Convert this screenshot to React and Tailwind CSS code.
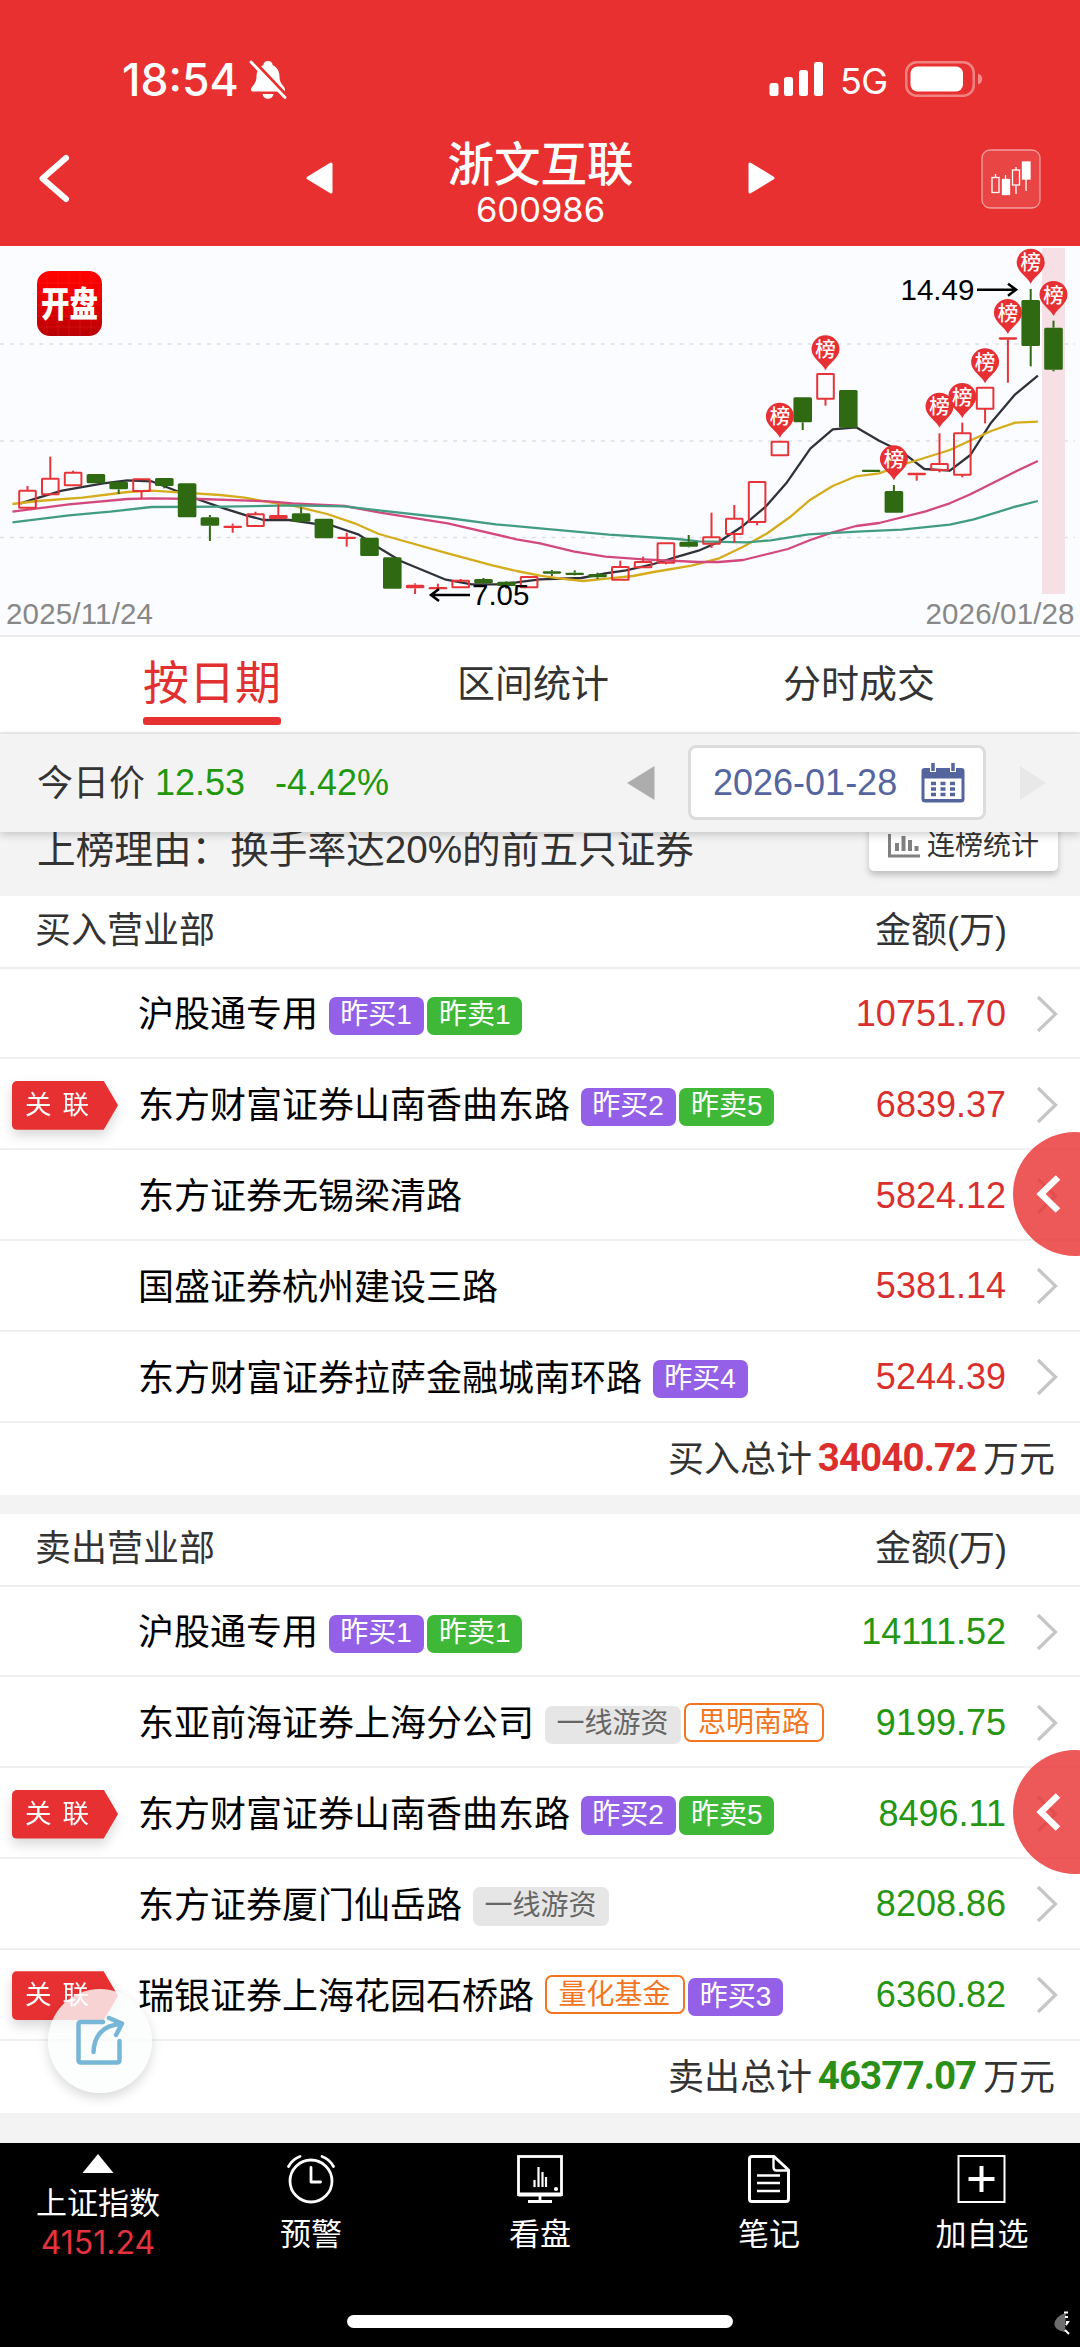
import React from "react";

const STEP = 22.8;
const cx = (i) => 27.5 + i * STEP;
const cy = (v) => v / 3 - 6;

// [kind, body top, body bottom, high, low]; r = rising (hollow), f = rising (solid), g = falling
const CANDLES = [
  ["r", 752, 803, 738, 808], ["r", 716, 763, 650, 763], ["r", 698, 736, 692, 736],
  ["g", 702, 730, 702, 730], ["g", 725, 748, 725, 762], ["r", 718, 753, 718, 776],
  ["g", 714, 738, 714, 745], ["g", 730, 832, 730, 832], ["g", 832, 857, 825, 903],
  ["f", 857, 864, 851, 878], ["r", 823, 858, 815, 858], ["f", 825, 837, 793, 837],
  ["g", 820, 845, 802, 845], ["g", 836, 895, 836, 895], ["f", 890, 897, 878, 920],
  ["g", 893, 948, 893, 948], ["g", 952, 1046, 952, 1046], ["f", 1034, 1045, 1030, 1062],
  ["f", 1041, 1048, 1031, 1051], ["r", 1022, 1042, 1017, 1042], ["g", 1017, 1030, 1014, 1032],
  ["g", 1025, 1038, 1023, 1046], ["r", 1011, 1042, 1011, 1042], ["g", 994, 1001, 990, 1008],
  ["g", 998, 1005, 991, 1006], ["g", 1002, 1012, 998, 1017], ["r", 981, 1019, 962, 1019],
  ["r", 966, 982, 950, 982], ["r", 910, 968, 910, 973], ["g", 905, 920, 885, 922],
  ["r", 892, 911, 818, 924], ["r", 836, 882, 795, 908], ["r", 726, 846, 726, 856],
  ["r", 605, 646, 605, 646], ["g", 472, 547, 472, 570], ["r", 402, 476, 402, 497],
  ["g", 450, 563, 450, 563], ["g", 689, 696, 689, 696], ["g", 753, 818, 735, 818],
  ["f", 698, 706, 698, 722], ["r", 672, 690, 580, 697], ["r", 580, 704, 548, 712],
  ["r", 443, 506, 443, 550], ["f", 292, 299, 292, 428], ["g", 180, 318, 147, 379],
  ["g", 263, 389, 242, 394],
];

const PINS = [[33, 530], [35, 328], [38, 658], [40, 500], [41, 471], [42, 367], [43, 219], [44, 68], [45, 165]];

const L = [
  ["#30323a",
    [[60,790],[105,775],[180,752],[300,730],[370,721],[440,724],[513,753],[580,780],[650,805],[715,826],[765,840],[840,840],[912,851],[968,858],[1040,883],[1105,926],[1165,964],[1295,1019],[1370,1033],[1440,1033],[1500,1027]],
    [[0,1018],[120,1014],[190,1000],[250,991],[330,972],[400,950],[460,932],[520,905],[590,857],[655,800],[715,730],[785,626],[850,568],[918,562],[985,602],[1050,635],[1116,687],[1190,692],[1250,645],[1310,548],[1380,463],[1446,407]]],
  ["#d4ac1c",
    [[36,792],[110,783],[240,773],[370,756],[440,752],[520,757],[640,765],[710,773],[790,788],[850,797],[950,822],[1030,850],[1100,882],[1300,940],[1430,976],[1500,993]],
    [[0,1007],[60,1016],[125,1023],[200,1015],[270,1008],[330,996],[440,977],[520,955],[590,920],[660,880],[725,832],[785,779],[850,738],[918,709],[985,700],[1060,672],[1190,630],[1310,573],[1380,548],[1446,545]]],
  ["#d3487d",
    [[36,815],[200,793],[370,777],[440,775],[580,777],[780,784],[850,790],[1000,798],[1100,817],[1300,850],[1500,898]],
    [[0,910],[100,935],[190,950],[300,958],[460,966],[520,966],[590,960],[720,927],[785,900],[850,877],[918,858],[985,849],[1120,814],[1190,790],[1250,763],[1380,695],[1446,663]]],
  ["#419c82",
    [[36,847],[200,826],[320,815],[440,801],[650,800],[850,796],[1000,799],[1100,811],[1300,834],[1440,853]],
    [[0,865],[200,884],[400,897],[460,904],[600,907],[670,901],[780,883],[920,875],[1050,869],[1190,854],[1260,838],[1380,800],[1446,783]]],
];
const K = 2.904;
const pts = (a, b) =>
  [...a.map(([x, y]) => [x / K, cy(y)]), ...b.map(([x, y]) => [540 + x / K, cy(y)])]
    .map(([x, y]) => `${x.toFixed(1)},${y.toFixed(1)}`)
    .join(" ");

function Candle({ i, d }) {
  const [k, t, b, h, l] = d;
  const x = cx(i);
  const color = k === "g" ? "#2f6a12" : "#e63438";
  return (
    <g stroke={color} strokeWidth="2">
      {h < t && <line x1={x} x2={x} y1={cy(h)} y2={cy(t)} />}
      {l > b && <line x1={x} x2={x} y1={cy(b)} y2={cy(l)} />}
      {k === "r" ? (
        <rect x={x - 8.3} y={cy(t)} width="16.6" height={cy(b) - cy(t)} fill="none" rx="0.5" />
      ) : (
        <rect x={x - 9.3} y={cy(t)} width="18.6" height={cy(b) - cy(t)} fill={color} stroke="none" rx="1.5" />
      )}
    </g>
  );
}

function Chart() {
  return (
    <svg width="1080" height="390" viewBox="0 0 1080 390" className="block bg-[#fbfcff]">
      <defs>
        <linearGradient id="logo" x1="0" y1="0" x2="0" y2="1">
          <stop offset="0" stopColor="#ff0400" />
          <stop offset="0.35" stopColor="#f00000" />
          <stop offset="1" stopColor="#b80005" />
        </linearGradient>
      </defs>
      {[98, 195, 291.5].map((y) => (
        <line key={y} x1="0" x2="1075" y1={y} y2={y} stroke="#dcdfe4" strokeWidth="1.6" strokeDasharray="4 5.85" />
      ))}
      <rect x="1042" y="2" width="23" height="346" fill="#f6dfe5" />
      {L.map(([c, a, b]) => (
        <polyline key={c} points={pts(a, b)} fill="none" stroke={c} strokeWidth="2.3" strokeLinejoin="round" />
      ))}
      {CANDLES.map((d, i) => <Candle key={i} i={i} d={d} />)}
      {PINS.map(([i, v]) => (
        <g key={i} transform={`translate(${cx(i)} ${cy(v)})`}>
          <path d="M0 21 C-3 14 -14 9 -14 0 A14 14 0 1 1 14 0 C14 9 3 14 0 21Z" fill="#e63033" />
          <text y="7.5" fontSize="20.5" fontWeight="500" fill="#fff" textAnchor="middle">榜</text>
        </g>
      ))}
      <rect x="37" y="25" width="65" height="65" rx="13" fill="url(#logo)" />
      <path d="M47 25v65M58 25v65M69 25v65M80 25v65M91 25v65M37 37h65M37 48h65M37 59h65M37 70h65M37 81h65" stroke="#ff5a3a" strokeOpacity="0.18" />
      <text transform="translate(69.5 70.5) scale(1 1.25)" fontSize="28.5" fontWeight="900" fill="#fff" textAnchor="middle">开盘</text>
      <g fill="none" stroke="#000" strokeWidth="2.6">
        <path d="M470 349H431M439 343L431 349L439 355" />
        <path d="M977 43.7H1016M1008 37.7L1016 43.7L1008 49.7" />
      </g>
      <text x="472" y="358.5" fontSize="29.5" fill="#000">7.05</text>
      <text x="900.5" y="54" fontSize="29.5" fill="#000">14.49</text>
      <text x="6" y="378" fontSize="29.5" fill="#888" textLength="147">2025/11/24</text>
      <text x="925.5" y="378" fontSize="29.5" fill="#888" textLength="149">2026/01/28</text>
    </svg>
  );
}

function StatusBar() {
  return (
    <div className="flex h-[118px] items-start pl-[122px] pr-[97px] pt-[58px]">
      <span className="w-[126px] whitespace-nowrap font-['Inter'] text-[44.500px] font-medium leading-[44px]">18:54</span>
      <svg width="40" height="42" viewBox="0 0 40 42" className="mt-[1px]">
        <path d="M20 2c-3 0-4.500 2-4.700 4.200C10.500 8.200 8.500 12.500 8.500 18c0 7-5.500 9.500-5.500 12.500C3 32 4 32.500 5 32.500h30c1 0 2-.5 2-2 0-3-5.500-5.500-5.500-12.500 0-5.500-2-9.800-6.800-11.800C24.500 4 23 2 20 2Z" fill="#fff" />
        <path d="M14.500 35h11c-.5 3-2.500 4.800-5.500 4.800S15 38 14.500 35Z" fill="#fff" />
        <path d="M6 2 40 38" stroke="#e83030" strokeWidth="3" />
        <path d="M3 3 37 38.500" stroke="#fff" strokeWidth="2.800" strokeLinecap="round" />
      </svg>
      <svg width="56" height="36" viewBox="0 0 56 36" className="ml-auto mt-[3px]" fill="#fff">
        <rect x="0.500" y="22" width="9" height="13" rx="2.500" />
        <rect x="15" y="16" width="9" height="19" rx="2.500" />
        <rect x="30" y="9" width="9" height="26" rx="2.500" />
        <rect x="45" y="1" width="9" height="34" rx="2.500" />
      </svg>
      <span className="ml-[15px] mt-[5px] w-[48px] whitespace-nowrap font-['Inter'] text-[36px] font-normal leading-[36px] tracking-[-0.600px]">5G</span>
      <svg width="78" height="36" viewBox="0 0 78 36" className="ml-[17px] mt-[3px]">
        <rect x="1.250" y="1.250" width="67.500" height="33.500" rx="10.500" fill="none" stroke="#fff" strokeOpacity="0.4" strokeWidth="2.500" />
        <rect x="5.500" y="5.500" width="52.500" height="25" rx="7" fill="#fff" />
        <path d="M73 12.500c3 1 4.200 3 4.200 5.500s-1.200 4.500-4.200 5.500Z" fill="#fff" fillOpacity="0.45" />
      </svg>
    </div>
  );
}

function TitleBar() {
  return (
    <div className="flex h-[128px] items-start">
      <svg width="38" height="52" viewBox="0 0 38 52" className="ml-[35px] mt-[34px]">
        <path d="M31 6 7.500 26.500 31 47" fill="none" stroke="#fff" strokeWidth="6" strokeLinecap="round" strokeLinejoin="round" />
      </svg>
      <svg width="30" height="34" viewBox="0 0 30 34" className="ml-[231px] mt-[43px]">
        <path d="M27 3v28L4 17Z" fill="#fff" stroke="#fff" strokeWidth="3" strokeLinejoin="round" />
      </svg>
      <div className="mt-[22px] flex w-[413px] flex-col items-center">
        <div className="text-[46.500px] font-medium leading-[50px]">浙文互联</div>
        <div className="mt-[3px] font-['Inter'] text-[34.500px] font-normal leading-[34px]">600986</div>
      </div>
      <svg width="30" height="34" viewBox="0 0 30 34" className="mt-[43px]">
        <path d="M3 3v28L26 17Z" fill="#fff" stroke="#fff" strokeWidth="3" strokeLinejoin="round" />
      </svg>
      <svg width="60" height="60" viewBox="0 0 60 60" className="ml-[204px] mt-[30.500px]">
        <rect x="1" y="1" width="58" height="58" rx="8" fill="#fff" fillOpacity="0.1" stroke="#fff" strokeOpacity="0.5" strokeWidth="1.300" />
        <g stroke="#fff" strokeWidth="1.300" fill="none">
          <path d="M14.500 25v3M24.500 26v4M35 18v3M35 36v9M45 30v12" />
          <rect x="11" y="28.500" width="7" height="15" />
          <rect x="31.500" y="21" width="7" height="15" />
          <rect x="21.500" y="30.500" width="7" height="15" fill="#fff" />
          <rect x="41.500" y="13" width="7.500" height="17" fill="#fff" />
        </g>
      </svg>
    </div>
  );
}

function Tag({ kind, children }) {
  const cls = {
    buy: "mt-[4px] bg-[#9560e8] px-[11.800px] text-white",
    sell: "mt-[4px] bg-[#3fb838] px-[11.800px] text-white",
    gray: "mt-[4px] bg-[#e6e6e6] px-[12px] text-[#666]",
    orange: "-mt-[1px] border-[2.500px] border-[#f3751f] px-[12px] text-[#f3751f]",
  }[kind];
  return (
    <span className={`flex h-[38.500px] items-center rounded-[7px] text-[28px] leading-none ${cls}`}>
      <span className={kind === "orange" ? "mt-[1px]" : "-mt-[1px]"}>{children}</span>
    </span>
  );
}

function Ribbon() {
  return (
    <div className="mt-[1px] flex h-[49px] w-[106px] drop-shadow-[0_6px_6px_rgba(0,0,0,0.15)]">
      <div className="flex w-full items-center gap-[11px] rounded-l-[5px] bg-[#e73031] pl-[13px] text-[26.500px] leading-none text-white [clip-path:polygon(0_0,86.500%_0,100%_50%,86.500%_100%,0_100%)]">
        <span>关</span>
        <span>联</span>
      </div>
    </div>
  );
}

function Row({ name, tags = [], amount, color, linked }) {
  return (
    <div className="flex h-[90.800px] items-center border-b-2 border-[#f0f0f0] bg-white pt-[2px]">
      <div className="w-[138px] shrink-0 pl-3">{linked && <Ribbon />}</div>
      <div className="flex items-center">
        <span className="mt-[3px] text-[36px] leading-none text-black">{name}</span>
        <div className="ml-[10.500px] flex items-center gap-[3.500px]">
          {tags.map(([k, t]) => <Tag key={t} kind={k}>{t}</Tag>)}
        </div>
      </div>
      <span className={`ml-auto text-[36px] leading-none ${color}`}>{amount}</span>
      <svg width="24" height="40" viewBox="0 0 24 40" className="ml-[29px] mr-[21px]">
        <path d="M3 3 20.500 20 3 37" fill="none" stroke="#c6c6c6" strokeWidth="3.200" />
      </svg>
    </div>
  );
}

function Section({ title, rows, total, totalLabel, color, bold }) {
  return (
    <section className="relative bg-white">
      <div className="flex h-[72.600px] items-center justify-between border-b-2 border-[#eeeeee] pl-[35px] pr-[73px] text-[36px] leading-none text-[#333]">
        <span>{title}</span>
        <span>金额(万)</span>
      </div>
      {rows.map((r) => <Row key={r.name} {...r} color={color} />)}
      <div className="flex h-[72px] items-center justify-end pr-[25px] pt-[2px] text-[36px] leading-none text-[#333]">
        <span>{totalLabel}</span>
        <span className={`mx-[5px] -mt-[2px] w-[160px] text-center font-['Roboto'] text-[38.500px] font-bold tracking-[-0.900px] ${bold}`}>{total}</span>
        <span className="ml-[1px]">万元</span>
      </div>
      <div className="absolute right-0 top-[236px] h-[124px] w-[67px] overflow-hidden">
        <div className="flex h-[124px] w-[124px] items-center rounded-full bg-[#e83030]/80 pl-[22px]">
          <svg width="28" height="42" viewBox="0 0 28 42">
            <path d="M23 4.500 6 21 23 37.500" fill="none" stroke="#fff" strokeWidth="6.500" />
          </svg>
        </div>
      </div>
    </section>
  );
}

const BUY = [
  { name: "沪股通专用", tags: [["buy", "昨买1"], ["sell", "昨卖1"]], amount: "10751.70" },
  { name: "东方财富证券山南香曲东路", tags: [["buy", "昨买2"], ["sell", "昨卖5"]], amount: "6839.37", linked: true },
  { name: "东方证券无锡梁清路", amount: "5824.12" },
  { name: "国盛证券杭州建设三路", amount: "5381.14" },
  { name: "东方财富证券拉萨金融城南环路", tags: [["buy", "昨买4"]], amount: "5244.39" },
];
const SELL = [
  { name: "沪股通专用", tags: [["buy", "昨买1"], ["sell", "昨卖1"]], amount: "14111.52" },
  { name: "东亚前海证券上海分公司", tags: [["gray", "一线游资"], ["orange", "思明南路"]], amount: "9199.75" },
  { name: "东方财富证券山南香曲东路", tags: [["buy", "昨买2"], ["sell", "昨卖5"]], amount: "8496.11", linked: true },
  { name: "东方证券厦门仙岳路", tags: [["gray", "一线游资"]], amount: "8208.86" },
  { name: "瑞银证券上海花园石桥路", tags: [["orange", "量化基金"], ["buy", "昨买3"]], amount: "6360.82", linked: true },
];

function NavItem({ icon, label, className }) {
  return (
    <div className={`flex w-[120px] flex-col items-center pt-[11px] ${className}`}>
      <svg width="50" height="50" viewBox="0 0 50 50" fill="none" stroke="#fff">{icon}</svg>
      <span className="mt-[15px] whitespace-nowrap text-[31px] leading-[31px]">{label}</span>
    </div>
  );
}

function BottomBar() {
  return (
    <nav className="relative flex h-[204px] items-start bg-black text-white">
      <div className="ml-[28px] flex w-[140px] flex-col items-center pt-[11px]">
        <svg width="32" height="19" viewBox="0 0 32 19"><path d="M16 0 31.500 19H.5Z" fill="#fff" /></svg>
        <span className="mt-[15px] text-[31px] leading-[31px]">上证指数</span>
        <span className="mt-[8px] font-['Inter'] text-[32px] leading-[31px] text-[#e6323c]">4151.24</span>
      </div>
      <NavItem className="ml-[83px]" label="预警" icon={
        <g strokeWidth="2.800" strokeLinecap="round">
          <circle cx="25" cy="27" r="21" />
          <path d="M25 13.500v14.500h9.500" strokeLinejoin="round" />
          <path d="M2.500 12.500C5 8 9.500 4 14 2.500M47.500 12.500C45 8 40.500 4 36 2.500" />
        </g>} />
      <NavItem className="ml-[109px]" label="看盘" icon={
        <g strokeWidth="2.800">
          <rect x="3.500" y="2.500" width="43" height="38" />
          <path d="M3.500 40.500h43" strokeWidth="4" />
          <path d="M19.500 33v-7M23.500 33V13M27.500 33V18M31 33v-10" strokeWidth="2.200" />
          <circle cx="41" cy="35" r="1.300" fill="#fff" strokeWidth="1.500" />
          <path d="M25 41v6M13 47.500h24" />
        </g>} />
      <NavItem className="ml-[109px]" label="笔记" icon={
        <g strokeWidth="3" strokeLinejoin="round">
          <path d="M8 2.500h22L44.500 16v29c0 1.500-.8 2.500-2.500 2.500H8c-1.500 0-2.500-1-2.500-2.500V5c0-1.500 1-2.500 2.500-2.500Z" />
          <path d="M29.500 2.500V13c0 2 1 3.500 3 3.500h12" strokeWidth="2.400" />
          <path d="M13 21.500h23M13 29h23M13 37h23" strokeWidth="2.600" />
        </g>} />
      <NavItem className="ml-[93px]" label="加自选" icon={
        <g>
          <rect x="1.500" y="2" width="46" height="46" strokeWidth="2" />
          <path d="M24.500 12v26M11.500 25h26" strokeWidth="4" />
        </g>} />
      <div className="absolute left-[347px] top-[172px] h-[12.500px] w-[386px] rounded-full bg-white" />
      <svg width="18" height="26" viewBox="0 0 18 26" className="absolute left-[1053px] top-[167px]">
        <path d="M13 3C6 5 2 9 1.500 13.500S6 21 12 22Z" fill="#888" opacity="0.800" />
        <path d="M11 2.500h4M12 7h3M13 12h2l-2 3M12 20l4 4" stroke="#fff" strokeWidth="2" fill="none" />
      </svg>
    </nav>
  );
}

export default function App() {
  return (
    <div className="relative flex h-[2347px] w-[1080px] flex-col overflow-hidden bg-[#f3f3f3] font-['Liberation_Sans','Noto_Sans_CJK_SC',sans-serif]">
      <header className="h-[246px] shrink-0 bg-[#e83030] text-white">
        <StatusBar />
        <TitleBar />
      </header>
      <Chart />
      <div className="-mt-[1px] flex h-[98.500px] shrink-0 items-start border-y-2 border-[#ececec] bg-white text-[38px] text-[#333]">
        <div className="ml-[143px] flex w-[138px] flex-col items-center pt-[23px] text-[#e03030]">
          <span className="whitespace-nowrap text-[46px] leading-[46px]">按日期</span>
          <span className="mt-[11px] h-[8px] w-full rounded-[3px] bg-[#e63031]" />
        </div>
        <span className="ml-[176px] w-[152px] pt-[28px] leading-[38px]">区间统计</span>
        <span className="ml-[174px] w-[152px] pt-[28px] leading-[38px]">分时成交</span>
      </div>
      <div className="relative z-10 flex h-[98.500px] shrink-0 items-center bg-[#f3f3f3] pl-[37px] text-[36px] leading-none shadow-[0_3px_8px_rgba(0,0,0,0.18)]">
        <span className="mt-[2px] text-[#333]">今日价</span>
        <span className="ml-[10px] w-[120px] text-[#1f980c]">12.53</span>
        <span className="w-[114px] text-[#1f980c]">-4.42%</span>
        <svg width="28" height="34" viewBox="0 0 28 34" className="ml-[238px]"><path d="M27.500 0v34L0 17Z" fill="#adadad" /></svg>
        <div className="ml-[33px] flex h-[75px] w-[298px] items-center rounded-[8px] border-[3px] border-[#dcdcdc] bg-white pl-[22px] text-[#5565a0]">
          <span className="w-[184px] whitespace-nowrap">2026-01-28</span>
          <svg width="44" height="40" viewBox="0 0 44 40" className="ml-[24px]">
            <path d="M3.500 5h37Q43.500 5 43.500 8v28q0 3.500-3.500 3.500H4Q.5 39.500.5 36V8q0-3 3-3Z" fill="#54649c" />
            <rect x="3.500" y="15.500" width="37" height="20.500" fill="#fff" />
            <path d="M9 0h6v9H9ZM29 0h6v9h-6Z" fill="#fff" />
            <path d="M12 0v8M32 0v8" stroke="#54649c" strokeWidth="3.500" />
            <path d="M10 20.500h24M10 26h24M10 31.500h24" stroke="#54649c" strokeWidth="3.500" strokeDasharray="5 4.500" />
          </svg>
        </div>
        <svg width="27" height="34" viewBox="0 0 27 34" className="ml-[34px]"><path d="M0 0v34L26 17Z" fill="#e8e8e8" /></svg>
      </div>
      <div className="flex h-[64px] shrink-0 items-start justify-between bg-[#f3f3f3] pl-[37px] pr-[22px]">
        <span className="-mt-[1px] whitespace-nowrap text-[38.650px] leading-[38.500px] text-[#333]">上榜理由：换手率达20%的前五只证券</span>
        <div className="-mt-[14px] flex h-[53px] w-[189px] items-center gap-[6px] rounded-[5px] bg-white pl-[19px] pt-[2px] text-[28px] leading-none text-[#333] shadow-[0_4px_6px_rgba(0,0,0,0.22)]">
          <svg width="33" height="24" viewBox="0 0 33 24" fill="none" stroke="#808080">
            <path d="M1.500 0v22H32" strokeWidth="3" />
            <path d="M9 17V9M15.500 17V2M22 17V6M28.500 17v-5" strokeWidth="4" />
          </svg>
          <span>连榜统计</span>
        </div>
      </div>
      <Section title="买入营业部" rows={BUY} totalLabel="买入总计" total="34040.72" color="text-[#d9302f]" bold="text-[#dc2f2d]" />
      <div className="h-[19.400px] shrink-0" />
      <Section title="卖出营业部" rows={SELL} totalLabel="卖出总计" total="46377.07" color="text-[#259612]" bold="text-[#2a8f17]" />
      <div className="mt-auto"><BottomBar /></div>
      <div className="absolute left-[48px] top-[1989px] z-20 flex h-[104px] w-[104px] items-center justify-center rounded-full bg-[#fbfcfd]/80 shadow-[0_5px_12px_rgba(0,0,0,0.15)]">
        <svg width="50" height="52" viewBox="0 0 50 52" fill="none" stroke="#77b6d6" strokeWidth="4.500" strokeLinecap="round" strokeLinejoin="round">
          <path d="M28 7H6Q3.500 7 3.500 9.500V45q0 2.500 2.500 2.500h36q2.500 0 2.500-2.500V26" />
          <path d="M18.500 37C19 22 27 10 46 9M34 3 47 8.500 41 20" />
        </svg>
      </div>
    </div>
  );
}
